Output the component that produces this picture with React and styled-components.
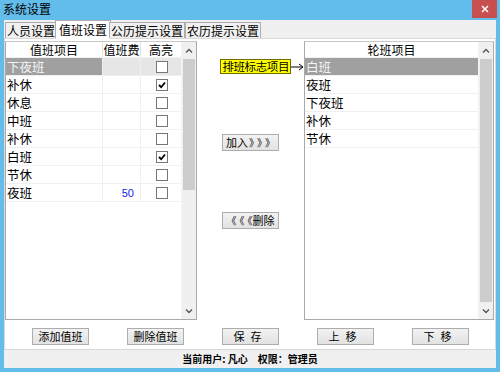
import React from "react";
import styled, { createGlobalStyle } from "styled-components";

const GlobalStyle = createGlobalStyle`
  html, body {
    margin: 0;
    padding: 0;
    background: #ffffff;
  }
  * {
    box-sizing: border-box;
  }
  body {
    font-family: "Noto Sans CJK SC", "Noto Sans", sans-serif;
    font-size: 12px;
    color: #000000;
  }
`;

const Window = styled.div`
  width: 500px;
  height: 372px;
  background: #62bdeb;
  display: flex;
  flex-direction: column;
  padding: 0 4px 4px 4px;
`;

const TitleBar = styled.div`
  height: 20px;
  display: flex;
  align-items: center;
  justify-content: space-between;
  margin-right: -1px;
`;

const Title = styled.span`
  font-size: 12px;
  line-height: 18px;
  margin-left: -1px;
  margin-top: -2px;
`;

const CloseButton = styled.div`
  width: 25px;
  height: 18px;
  align-self: flex-start;
  background: #c74f50;
  color: #ffffff;
  display: flex;
  align-items: center;
  justify-content: center;
`;

const Client = styled.div`
  flex: 1;
  background: #f0f0f0;
  display: flex;
  flex-direction: column;
  min-height: 0;
`;

const TabStrip = styled.div`
  height: 18px;
  display: flex;
  align-items: flex-end;
  padding-left: 1px;
  position: relative;
  z-index: 1;
`;

const Tab = styled.div`
  height: ${(p) => (p.$active ? "19px" : "16px")};
  padding: 0 ${(p) => (p.$active ? "3px" : "1px")};
  margin-left: ${(p) => (p.$active ? "-2px" : "0")};
  margin-right: ${(p) => (p.$active ? "-2px" : "0")};
  border: 1px solid #adadad;
  border-bottom: ${(p) => (p.$active ? "1px solid #ffffff" : "none")};
  background: ${(p) => (p.$active ? "#ffffff" : "#f0f0f0")};
  margin-bottom: ${(p) => (p.$active ? "-1px" : "0")};
  display: flex;
  align-items: center;
  font-size: 12px;
  line-height: 14px;
  white-space: nowrap;
  & + & {
    border-left: ${(p) => (p.$active ? "1px solid #adadad" : "none")};
  }
`;

const Panel = styled.div`
  flex: 1;
  background: #ffffff;
  border: 1px solid #d9d9d9;
  border-bottom: none;
  display: flex;
  flex-direction: column;
  padding: 2px 2px 0 0;
`;

const Lists = styled.div`
  display: grid;
  grid-template-columns: 192px 107px 190px;
  height: 279px;
`;

const ListBox = styled.div`
  border: 1px solid #aaaaaa;
  border-top-color: #c8c8c8;
  display: flex;
  background: #ffffff;
`;

const ListBody = styled.div`
  flex: 1;
  display: flex;
  flex-direction: column;
`;

const Row = styled.div`
  display: grid;
  grid-template-columns: ${(p) => p.$cols};
  height: ${(p) => (p.$header ? "16px" : "18px")};
  border-bottom: 1px solid #f0f0f0;
`;

const HeaderCell = styled.div`
  display: flex;
  align-items: center;
  justify-content: center;
  font-size: 12px;
  line-height: 14px;
  white-space: nowrap;
  overflow: hidden;
  border-right: 1px solid #e3e3e3;
  &:last-child {
    border-right: none;
  }
`;

const Cell = styled.div`
  display: flex;
  align-items: center;
  justify-content: ${(p) => p.$align || "flex-start"};
  padding: ${(p) => (p.$align === "flex-end" ? "0 6px 0 0" : "0 0 0 1px")};
  font-size: 12.5px;
  line-height: 14px;
  white-space: nowrap;
  border-right: 1px solid #f0f0f0;
  background: ${(p) => (p.$sel ? "#a0a0a0" : p.$selLight ? "#e6e6e6" : "#ffffff")};
  color: ${(p) => (p.$sel ? "#f4f4f4" : p.$blue ? "#2020f0" : "#000000")};
  &:last-child {
    border-right: none;
  }
`;

const Fee = styled.span`
  font-family: "Liberation Sans", Arial, sans-serif;
  font-size: 11px;
`;

const Box = styled.div`
  width: 12px;
  height: 12px;
  border: 1px solid #777777;
  background: #ffffff;
  display: flex;
  align-items: center;
  justify-content: center;
`;

const ScrollBar = styled.div`
  width: 15px;
  background: #f0f0f0;
  display: flex;
  flex-direction: column;
  border-left: 1px solid #f4f4f4;
`;

const ScrollArrow = styled.div`
  height: 17px;
  display: flex;
  align-items: center;
  justify-content: center;
`;

const Track = styled.div`
  flex: 1;
  display: flex;
  flex-direction: column;
  padding: 0 1px;
`;

const Thumb = styled.div`
  height: ${(p) => p.$h};
  background: #cdcdcd;
`;

const Middle = styled.div`
  display: flex;
  flex-direction: column;
  align-items: center;
  padding-top: 17px;
`;

const MarkRow = styled.div`
  display: flex;
  align-items: center;
  align-self: flex-end;
  height: 17px;
`;

const MarkLabel = styled.div`
  background: #ffff00;
  border: 1px solid #6b6b00;
  height: 15px;
  padding: 0 1px;
  display: flex;
  align-items: center;
  font-size: 11.5px;
  line-height: 13px;
  letter-spacing: -0.4px;
  white-space: nowrap;
`;

const Button = styled.div`
  width: ${(p) => p.$w || "57px"};
  height: 17px;
  border: 1px solid #adadad;
  background: linear-gradient(#f2f2f2, #e2e2e2);
  display: flex;
  align-items: center;
  justify-content: center;
  font-size: 11px;
  line-height: 13px;
  white-space: nowrap;
  margin-top: ${(p) => p.$mt || "0"};
  letter-spacing: ${(p) => p.$ls || "0"};
`;

const Arrows = styled.span`
  font-size: 10px;
  line-height: 12px;
  letter-spacing: 3px;
  margin: ${(p) => (p.$left ? "0 -3px 0 0" : "0 -3px 0 1px")};
  color: #000000;
`;

const ButtonRow = styled.div`
  display: flex;
  gap: 38px;
  padding: 8px 0 0 27px;
`;

const StatusBar = styled.div`
  height: 19px;
  border-top: 1px solid #d7d7d7;
  background: #f0f0f0;
  display: flex;
  align-items: center;
  justify-content: center;
  font-size: 10px;
  line-height: 12px;
  font-weight: bold;
  gap: 10px;
`;

const Check = () => (
  <svg width="10" height="10" viewBox="0 0 10 10">
    <path d="M2 5 L4.2 7.2 L8 2.5" stroke="#000" strokeWidth="1.8" fill="none" />
  </svg>
);

const Chevron = ({ down }) => (
  <svg width="8" height="6" viewBox="0 0 8 6">
    <path
      d={down ? "M1 1.5 L4 4.5 L7 1.5" : "M1 4.5 L4 1.5 L7 4.5"}
      stroke="#555"
      strokeWidth="1.4"
      fill="none"
    />
  </svg>
);

const Scroll = ({ thumb }) => (
  <ScrollBar>
    <ScrollArrow>
      <Chevron />
    </ScrollArrow>
    <Track>
      <Thumb $h={thumb} />
    </Track>
    <ScrollArrow>
      <Chevron down />
    </ScrollArrow>
  </ScrollBar>
);

const duty = [
  { name: "下夜班", fee: "", on: false },
  { name: "补休", fee: "", on: true },
  { name: "休息", fee: "", on: false },
  { name: "中班", fee: "", on: false },
  { name: "补休", fee: "", on: false },
  { name: "白班", fee: "", on: true },
  { name: "节休", fee: "", on: false },
  { name: "夜班", fee: "50", on: false },
];

const shifts = ["白班", "夜班", "下夜班", "补休", "节休"];

const leftCols = "97px 38px 40px";

export default function App() {
  return (
    <>
      <GlobalStyle />
      <Window>
        <TitleBar>
          <Title>系统设置</Title>
          <CloseButton>
            <svg width="8" height="8" viewBox="0 0 8 8">
              <path d="M1 1 L7 7 M7 1 L1 7" stroke="#fff" strokeWidth="1.5" />
            </svg>
          </CloseButton>
        </TitleBar>
        <Client>
          <TabStrip>
            <Tab>人员设置</Tab>
            <Tab $active>值班设置</Tab>
            <Tab>公历提示设置</Tab>
            <Tab>农历提示设置</Tab>
          </TabStrip>
          <Panel>
            <Lists>
              <ListBox>
                <ListBody>
                  <Row $header $cols={leftCols}>
                    <HeaderCell>值班项目</HeaderCell>
                    <HeaderCell>值班费</HeaderCell>
                    <HeaderCell>高亮</HeaderCell>
                  </Row>
                  {duty.map((d, i) => (
                    <Row key={i} $cols={leftCols}>
                      <Cell $sel={i === 0}>{d.name}</Cell>
                      <Cell $selLight={i === 0} $align="flex-end" $blue>
                        <Fee>{d.fee}</Fee>
                      </Cell>
                      <Cell $selLight={i === 0} $align="center">
                        <Box>{d.on && <Check />}</Box>
                      </Cell>
                    </Row>
                  ))}
                </ListBody>
                <Scroll thumb="131px" />
              </ListBox>
              <Middle>
                <MarkRow>
                  <MarkLabel>排班标志项目</MarkLabel>
                  <svg width="13" height="8" viewBox="0 0 13 8">
                    <path d="M0 4 H12 M8 1 L12 4 L8 7" stroke="#000" strokeWidth="1" fill="none" />
                  </svg>
                </MarkRow>
                <Button $mt="59px">
                  加入<Arrows>》》》</Arrows>
                </Button>
                <Button $mt="61px">
                  <Arrows $left>《《《</Arrows>删除
                </Button>
              </Middle>
              <ListBox>
                <ListBody>
                  <Row $header $cols="1fr">
                    <HeaderCell>轮班项目</HeaderCell>
                  </Row>
                  {shifts.map((s, i) => (
                    <Row key={i} $cols="1fr">
                      <Cell $sel={i === 0}>{s}</Cell>
                    </Row>
                  ))}
                </ListBody>
                <Scroll thumb="100%" />
              </ListBox>
            </Lists>
            <ButtonRow>
              <Button>添加值班</Button>
              <Button>删除值班</Button>
              <Button $ls="6px">保存</Button>
              <Button $ls="6px">上移</Button>
              <Button $ls="6px">下移</Button>
            </ButtonRow>
          </Panel>
          <StatusBar>
            <span>当前用户: 凡心</span>
            <span>权限：管理员</span>
          </StatusBar>
        </Client>
      </Window>
    </>
  );
}
